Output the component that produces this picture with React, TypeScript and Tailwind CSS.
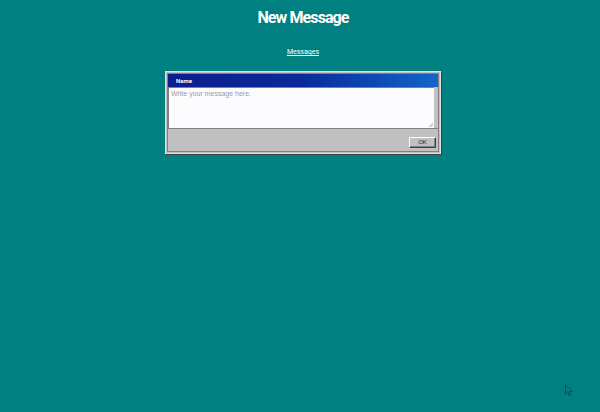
import React from 'react';

const App: React.FC = () => {
  return (
    <div className="relative min-h-[412px] w-full bg-[#008080] font-['Roboto',sans-serif] text-white overflow-hidden">
      <div className="flex flex-col items-center pt-[8px]">
        <h1 className="text-[16px] font-bold leading-[20px] tracking-[-0.9px] ml-[6px]">New Message</h1>
        <a href="#" className="mt-[19px] text-[7px] leading-[10px] underline ml-[6px]">
          Messages
        </a>

        {/* Dialog window */}
        <div className="mt-[14px] ml-[6px] w-[276px] bg-[#c0c0c0] border border-[#dfdfdf] shadow-[1px_1px_0_#404040] p-[1px]">
          <div className="border border-[#808080]">
            <div className="h-[13px] bg-gradient-to-r from-[#0a1e8c] via-[#0b2a9a] to-[#1565c8] flex items-center pl-[8px]">
              <span className="text-[6px] font-bold text-white">Name</span>
            </div>
            <div className="relative h-[41px] bg-[#fcfcff] border-t border-[#808080] border-l border-l-[#808080] mr-[4px]">
              <span className="absolute left-[2px] top-[1px] text-[7px] text-[#9a9a9a] font-['Liberation_Sans',sans-serif]">
                Write your message here.
              </span>
              <svg className="absolute right-[1px] bottom-[1px]" width="5" height="5" viewBox="0 0 5 5">
                <path d="M1 5 L5 1 M3 5 L5 3" stroke="#9a9a9a" strokeWidth="0.8" />
              </svg>
            </div>
            <div className="h-[23px] border-t border-[#808080] flex items-center justify-end pr-[2px] pt-[4px]">
              <button className="w-[27px] h-[11px] bg-[#c0c0c0] border border-t-white border-l-white border-r-[#404040] border-b-[#404040] shadow-[inset_-1px_-1px_0_#808080] flex items-center justify-center text-[6px] text-[#222] font-['Liberation_Sans',sans-serif]">
                OK
              </button>
            </div>
          </div>
        </div>
      </div>

      {/* mouse cursor */}
      <svg className="absolute left-[565px] top-[384px]" width="9" height="13" viewBox="0 0 9 13">
        <path d="M0.5 0.5 L0.5 10 L2.8 7.8 L4.5 11.5 L5.8 11 L4.2 7.3 L7.5 7.3 Z" fill="none" stroke="#1f4a4a" strokeWidth="1" />
      </svg>
    </div>
  );
};

export default App;
